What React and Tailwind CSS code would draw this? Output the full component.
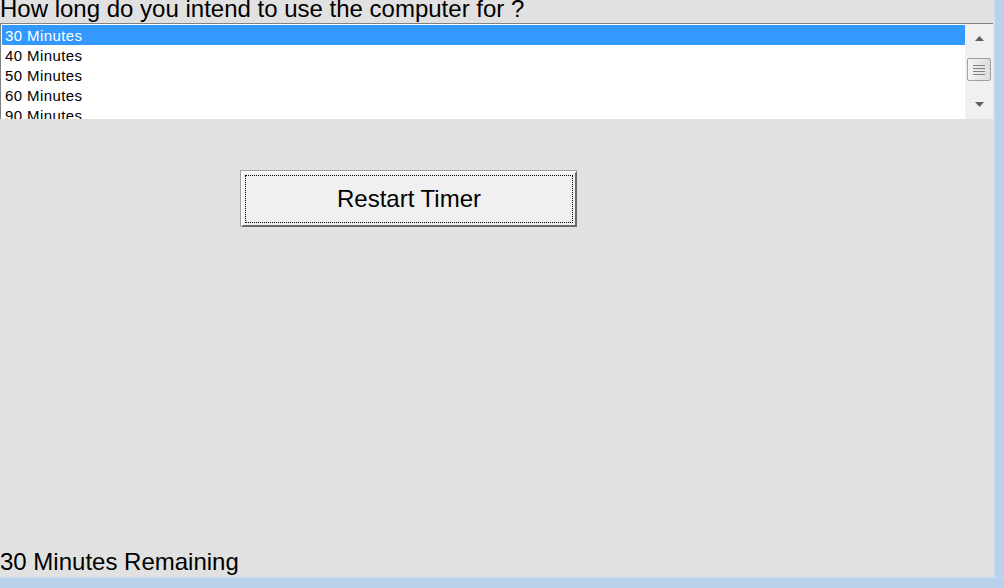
import { useState } from "react";

const options = ["30 Minutes", "40 Minutes", "50 Minutes", "60 Minutes", "90 Minutes", "120 Minutes"];

export default function App() {
  const [selected, setSelected] = useState(0);

  return (
    <div className="w-[1004px] h-[588px] bg-[#b9d1ea] flex flex-col overflow-hidden">
      <div className="flex flex-1 min-h-0">
        <div className="w-[994px] h-[577px] bg-[#e1e1e1] flex flex-col font-['Liberation_Sans',sans-serif] text-black">
          <div className="h-[23px] text-[24px] leading-[17px] whitespace-nowrap">
            How long do you intend to use the computer for ?
          </div>

          <div className="h-[96px] mr-[1px] border-t border-l border-[#828282] bg-white flex">
            <div className="flex-1 overflow-hidden pt-[1px] pl-[1px]">
              {options.map((o, i) => (
                <div
                  key={o}
                  onClick={() => setSelected(i)}
                  className={
                    "h-[20px] pl-[3px] pt-[1px] text-[15px] leading-[20px] tracking-[0.4px] " +
                    (i === selected ? "bg-[#3399ff] text-white" : "text-black")
                  }
                >
                  {o}
                </div>
              ))}
            </div>
            <div className="w-[28px] bg-[#f0f0f0] flex flex-col items-center">
              <div className="h-[28px] w-full flex items-center justify-center pt-[1px]">
                <svg width="9" height="5" viewBox="0 0 9 5"><path d="M0 5 L4.5 0 L9 5 Z" fill="#606060" /></svg>
              </div>
              <div className="mt-[6px] w-[24px] h-[23px] rounded-[2px] border border-[#a0a0a0] bg-gradient-to-r from-[#f4f4f4] to-[#dcdcdc] flex flex-col items-center justify-center gap-[2px]">
                <div className="w-[12px] h-[1px] bg-[#808080]" />
                <div className="w-[12px] h-[1px] bg-[#808080]" />
                <div className="w-[12px] h-[1px] bg-[#808080]" />
                <div className="w-[12px] h-[1px] bg-[#808080]" />
              </div>
              <div className="mt-auto h-[28px] w-full flex items-center justify-center pb-[2px]">
                <svg width="9" height="5" viewBox="0 0 9 5"><path d="M0 0 L9 0 L4.5 5 Z" fill="#606060" /></svg>
              </div>
            </div>
          </div>

          <div className="pl-[240px] pt-[51px]">
            <button className="w-[337px] h-[57px] bg-[#a0a0a0] pt-[1px] pl-[1px]">
              <div className="w-full h-full bg-[#f0f0f0] border-2 border-t-[#fafafa] border-l-[#fafafa] border-r-[#696969] border-b-[#696969] p-[2px]">
                <div className="w-full h-full border border-dotted border-black flex items-center justify-center text-[24px] leading-[24px]">
                  Restart Timer
                </div>
              </div>
            </button>
          </div>

          <div className="flex-1" />
          <div className="text-[24px] leading-[26px] h-[28px] whitespace-nowrap">30 Minutes Remaining</div>
        </div>
        <div className="flex-1 bg-[#b9d1ea] border-l border-[#c9dcf0]" />
      </div>
      <div className="h-[11px] bg-[#b9d1ea] border-t border-[#c9dcf0]" />
    </div>
  );
}
